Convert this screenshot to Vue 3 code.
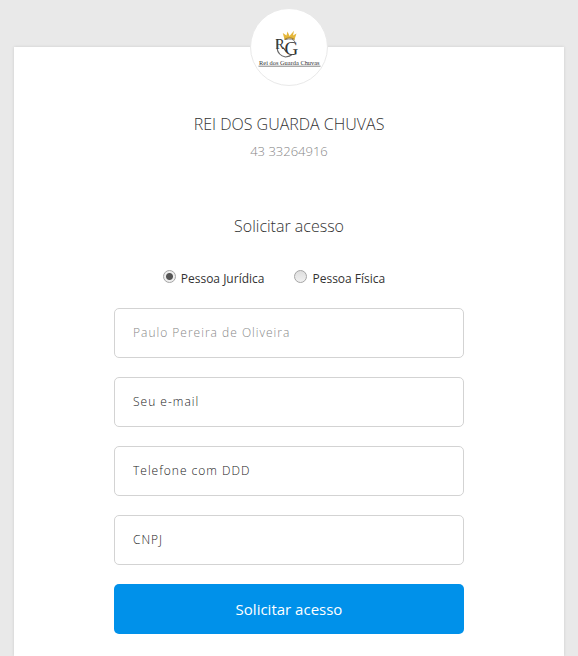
<template>
  <main class="page">
    <section class="card">
      <div class="logo">
        <svg viewBox="0 0 760 760" role="img" aria-label="Rei dos Guarda Chuvas">
          <!-- escudo -->
          <path d="M260 300 V390 Q270 465 345 480 Q390 475 410 455" fill="none" stroke="#666" stroke-width="12" />
          <path d="M320 385 L355 430" fill="none" stroke="#444" stroke-width="12" />
          <path d="M340 305 Q420 285 440 330" fill="none" stroke="#777" stroke-width="10" />
          <text x="242" y="400" class="letter small">R</text>
          <text x="336" y="457" class="letter">G</text>
          <!-- coroa -->
          <path d="M335 305 L318 240 L355 265 L365 225 L385 270 L430 218 L420 265 L455 245 L435 305 Q385 270 335 305 Z" fill="#e5b73b" />
          <path d="M335 305 Q385 270 435 305" fill="none" stroke="#a5802b" stroke-width="12" />
          <text x="383" y="555" class="brand">Rei dos Guarda Chuvas</text>
          <path d="M75 572 H695" stroke="#777" stroke-width="9" />
        </svg>
      </div>

      <h1 class="title">REI DOS GUARDA CHUVAS</h1>
      <p class="phone">43 33264916</p>
      <h2 class="subtitle">Solicitar acesso</h2>

      <form class="form" @submit.prevent>
        <div class="types">
          <label v-for="type in types" :key="type.value" class="type">
            <input v-model="person" type="radio" name="person" :value="type.value" />
            <span>{{ type.label }}</span>
          </label>
        </div>

        <input
          v-for="field in fields"
          :key="field.name"
          v-model="form[field.name]"
          class="field"
          :class="{ light: field.light }"
          :type="field.type"
          :name="field.name"
          :placeholder="field.placeholder"
          :aria-label="field.placeholder"
        />

        <button type="submit" class="submit">Solicitar acesso</button>
      </form>
    </section>
  </main>
</template>

<script setup>
import { ref } from 'vue';

const types = [
  { value: 'juridica', label: 'Pessoa Jurídica' },
  { value: 'fisica', label: 'Pessoa Física' },
];

const fields = [
  { name: 'nome', type: 'text', placeholder: 'Paulo Pereira de Oliveira', light: true },
  { name: 'email', type: 'email', placeholder: 'Seu e-mail' },
  { name: 'telefone', type: 'tel', placeholder: 'Telefone com DDD' },
  { name: 'documento', type: 'text', placeholder: 'CNPJ' },
];

const person = ref('juridica');
const form = ref({ nome: '', email: '', telefone: '', documento: '' });
</script>

<style>
body {
  background: #e9e9e9;
}
</style>

<style scoped>
.page {
  box-sizing: border-box;
  min-height: 100vh;
  padding: 47px 14px 0;
  display: flex;
  justify-content: center;
  font-family: "Open Sans", "Noto Sans", sans-serif;
  font-weight: 300;
  color: #333;
}

.card {
  box-sizing: border-box;
  width: 100%;
  max-width: 550px;
  padding: 0 20px 22px;
  display: flex;
  flex-direction: column;
  align-items: center;
  background: #fff;
  box-shadow: 0 0 3px rgba(0, 0, 0, 0.12);
}

.logo {
  width: 76px;
  height: 76px;
  margin-top: -39px;
  border: 1px solid #e9e9e9;
  border-radius: 50%;
  background: #fff;
}

.logo svg {
  display: block;
}

.letter {
  font: 190px "Liberation Serif", serif;
  fill: #333;
}

.letter.small {
  font-size: 140px;
}

.brand {
  font: 64px "Liberation Serif", serif;
  text-anchor: middle;
  fill: #333;
}

.title {
  margin: 26px 0 0;
  font-size: 16px;
  line-height: 24px;
  font-weight: 300;
}

.phone {
  margin: 5px 0 0;
  font-size: 13px;
  line-height: 20px;
  color: #888;
}

.subtitle {
  margin: 53px 0 0;
  font-size: 16px;
  line-height: 24px;
  font-weight: 300;
}

.form {
  width: 100%;
  max-width: 350px;
  margin-top: 31px;
  display: flex;
  flex-direction: column;
  gap: 19px;
}

.types {
  display: flex;
  justify-content: center;
}

.type {
  display: flex;
  gap: 5px;
  padding-right: 30px;
  font-size: 12px;
  line-height: 20px;
  font-weight: 400;
  cursor: pointer;
}

.type input {
  appearance: none;
  box-sizing: border-box;
  width: 13px;
  height: 13px;
  margin: 1px 0 0;
  border: 1px solid #a5a5a5;
  border-radius: 50%;
  background: linear-gradient(#dedede, #f1f1f1);
}

.type input:checked {
  background: radial-gradient(circle, #555 3px, #eee 4px);
}

.field {
  box-sizing: border-box;
  width: 100%;
  height: 50px;
  padding: 0 18px 2px;
  border: 1px solid #d3d3d3;
  border-radius: 5px;
  background: #fff;
  font: 300 12px "Open Sans", "Noto Sans", sans-serif;
  letter-spacing: 1px;
  color: #333;
}

.field::placeholder {
  color: #222;
  opacity: 1;
}

.field.light::placeholder {
  color: #888;
}

.submit {
  height: 50px;
  padding: 0;
  border: 0;
  border-radius: 5px;
  background: #0091ea;
  font: 400 15px "Open Sans", "Noto Sans", sans-serif;
  color: #fff;
  cursor: pointer;
}
</style>
